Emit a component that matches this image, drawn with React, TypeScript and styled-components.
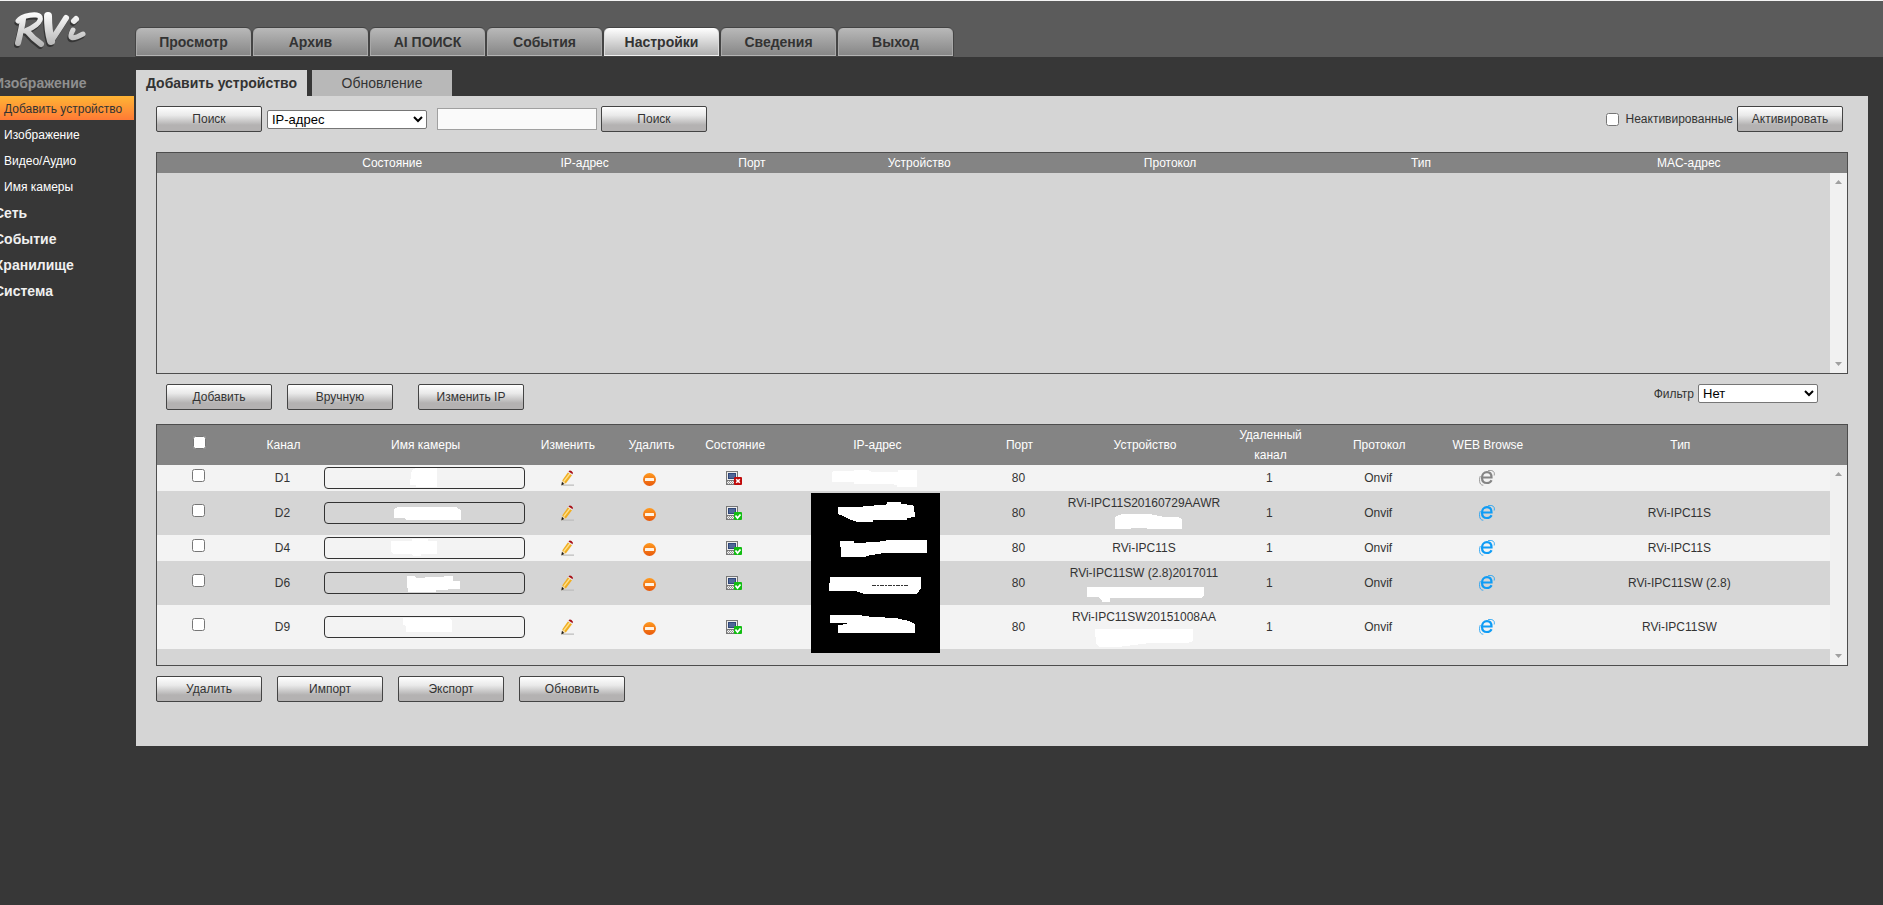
import React from "react";
import styled, { createGlobalStyle, css } from "styled-components";

const GlobalStyle = createGlobalStyle`
  * { box-sizing: border-box; }
  body {
    margin: 0;
    background: #373737;
    color: #333;
    font-family: "Liberation Sans", Arial, sans-serif;
    font-size: 12px;
    line-height: 20px;
  }
  button, input, select { font-family: inherit; }
`;

const Page = styled.div`
  min-height: 100vh;
  overflow-x: hidden;
`;

const Header = styled.header`
  display: flex;
  align-items: flex-end;
  height: 57px;
  border-top: 1px solid #f4f4f4;
  background: #5b5b5b;
`;

const LogoBox = styled.div`
  width: 135px;
  height: 56px;
  padding: 5px 8px;
`;

const MainNav = styled.nav`
  display: flex;
`;

const MainTab = styled.button<{ $active?: boolean }>`
  width: 117px;
  height: 30px;
  padding: 0;
  border: 1px solid #444;
  border-radius: 6px 6px 0 0;
  background: linear-gradient(#b9b9b9, #858585);
  box-shadow: inset 0 -1px 0 #b4b4b4, inset 1px 0 0 #a8a8a8, inset -1px 0 0 #a8a8a8;
  color: #333;
  font-size: 14px;
  font-weight: bold;
  ${(p) =>
    p.$active &&
    css`
      background: linear-gradient(#ffffff, #acacac);
      box-shadow: inset 0 -1px 0 #f0f0f0, inset 1px 0 0 #dcdcdc, inset -1px 0 0 #dcdcdc;
    `}
`;

const Columns = styled.div`
  display: flex;
  padding: 13px 15px 0 0;
`;

const Sidebar = styled.nav`
  display: flex;
  flex-direction: column;
  flex: none;
  gap: 2px;
  width: 136px;
  padding-right: 2px;
  overflow: hidden;
`;

const sideItem = css`
  display: block;
  height: 24px;
  line-height: 26px;
  text-decoration: none;
  white-space: nowrap;
`;

const SideGroup = styled.a<{ $open?: boolean }>`
  ${sideItem}
  margin-left: -6px;
  color: ${(p) => (p.$open ? "#8f8f8f" : "#f0f0f0")};
  font-size: 14px;
  font-weight: bold;
`;

const SideLink = styled.a<{ $active?: boolean }>`
  ${sideItem}
  padding-left: 4px;
  color: ${(p) => (p.$active ? "#333" : "#fff")};
  background: ${(p) => (p.$active ? "linear-gradient(#ffb535, #ff7a35)" : "none")};
`;

const Content = styled.main`
  flex: 1;
  min-width: 0;
`;

const SubTabs = styled.div`
  display: flex;
  gap: 5px;
`;

const SubTab = styled.button<{ $active?: boolean }>`
  width: ${(p) => (p.$active ? 171 : 140)}px;
  height: 26px;
  padding: 0;
  border: 0;
  background: ${(p) => (p.$active ? "#d5d5d5" : "#b8b8b8")};
  color: #333;
  font-size: 14px;
  font-weight: ${(p) => (p.$active ? "bold" : "normal")};
  white-space: nowrap;
`;

const Panel = styled.section`
  padding: 10px 20px 44px;
  background: #d5d5d5;
`;

const SearchBar = styled.div`
  display: flex;
  align-items: center;
  height: 26px;
  margin-bottom: 20px;
  padding-right: 5px;
`;

const ActionBar = styled.div`
  display: flex;
  align-items: flex-start;
  justify-content: space-between;
  margin: 10px 0 14px;
  padding: 0 30px 0 10px;
`;

const ButtonGroup = styled.div<{ $gap: number }>`
  display: flex;
  gap: ${(p) => p.$gap}px;
`;

const FooterBar = styled.div`
  display: flex;
  gap: 15px;
  margin-top: 10px;
`;

const Spacer = styled.div`
  flex: 1;
`;

const Gap = styled.div<{ $w: number }>`
  width: ${(p) => p.$w}px;
`;

const PushButton = styled.button`
  flex: none;
  width: 106px;
  height: 26px;
  padding: 0;
  border: 1px solid #444;
  border-radius: 2px;
  background: linear-gradient(#fff 0%, #e9e9e9 35%, #b4b2b2 75%, #b4b2b2 100%);
  color: #333;
  font-size: 12px;
`;

const Select = styled.select<{ $w: number }>`
  width: ${(p) => p.$w}px;
  height: 19px;
  padding: 0;
  border: 1px solid #767676;
  border-radius: 2px;
  background-color: #fff;
  color: #000;
  font-size: 13px;
`;

const SearchInput = styled.input`
  width: 160px;
  height: 22px;
  border: 1px solid #a0a0a0;
  background: #fafafa;
`;

const CheckLabel = styled.label`
  display: flex;
  align-items: center;
  gap: 7px;
  margin-right: 4px;
  white-space: nowrap;
`;

const FilterLabel = styled.label`
  display: flex;
  align-items: flex-start;
  gap: 4px;
`;

const Check = styled.input`
  display: block;
  width: 13px;
  height: 13px;
  margin: 0;
`;

const CellCheck = styled(Check)`
  margin: 0 auto 5px;
`;

const Grid = styled.div`
  display: flex;
  border: 1px solid #4d4d4d;
`;

const GridMain = styled.div<{ $head: number }>`
  flex: 1;
  min-width: 0;
  min-height: ${(p) => p.$head + 200}px;
`;

const Side = styled.div`
  display: flex;
  flex-direction: column;
  width: 17px;
`;

const SideCap = styled.div<{ $head: number }>`
  height: ${(p) => p.$head}px;
  background: #848484;
`;

const Scrollbar = styled.div`
  display: flex;
  flex: 1;
  flex-direction: column;
  align-items: center;
  justify-content: space-between;
  padding: 7px 0;
  background: #f1f1f1;
`;

const Table = styled.table`
  width: 100%;
  border-collapse: collapse;
  table-layout: fixed;
  text-align: center;
`;

const Th = styled.th`
  padding: 0 0 0 2px;
  background: #848484;
  color: #fff;
  font-weight: normal;
`;

const Tr = styled.tr`
  &:nth-child(odd) {
    background: #f3f3f3;
  }
`;

const Td = styled.td`
  position: relative;
  height: 26px;
  padding: 2px 0;
  vertical-align: middle;
  svg {
    display: block;
    margin: 0 auto;
  }
`;

const NameBox = styled.div`
  position: relative;
  height: 22px;
  svg {
    position: absolute;
    inset: 0;
  }
`;

const NameInput = styled.input`
  display: block;
  width: 100%;
  height: 22px;
  border: 1px solid #333;
  border-radius: 4px;
  background: transparent;
`;

const Cover = styled.div`
  position: absolute;
  z-index: 1;
  top: 2px;
  left: 50%;
  margin-left: -65px;
`;

const Arrow = ({ down }: { down?: boolean }) => (
  <svg width="7" height="4" aria-hidden="true">
    <path d={down ? "M0 0H7L3.5 4Z" : "M0 4H7L3.5 0Z"} fill="#a0a0a0" />
  </svg>
);

const Blot = ({ w, h, points }: { w: number; h: number; points: string }) => (
  <svg width={w} height={h} shapeRendering="crispEdges" aria-hidden="true">
    <polygon points={points} fill="#fff" />
  </svg>
);

const Logo = () => (
  <svg width="84" height="48" viewBox="0 0 84 48" role="img" aria-label="RVi">
    <defs>
      <linearGradient id="silver" gradientUnits="userSpaceOnUse" x1="0" y1="6" x2="0" y2="42">
        <stop offset="0" stopColor="#fff" />
        <stop offset="1" stopColor="#b0b0b0" />
      </linearGradient>
      <g id="mark" fill="none" strokeLinecap="round" strokeLinejoin="round">
        <path d="M15 13C14 21 12 29 10 37" strokeWidth="6" />
        <path d="M10 15C14 9 30 7 32 11C34 16 25 22 17 25" strokeWidth="5" />
        <path d="M19 25C23 30 27 34 33 38" strokeWidth="6" />
        <path d="M40 10C40 19 41 28 43 35" strokeWidth="8" />
        <path d="M43 35C48 28 53 20 58 12" strokeWidth="6" />
        <path d="M66 15L68 13" strokeWidth="6" />
        <path d="M65 24C60 33 64 34 75 28" strokeWidth="5" />
      </g>
    </defs>
    <use href="#mark" x="-1" y="2" stroke="#2c2c2c" opacity="0.800" />
    <use href="#mark" stroke="url(#silver)" />
  </svg>
);

const PencilIcon = () => (
  <svg width="15" height="16" viewBox="-2 0 15 16" aria-hidden="true">
    <path d="M2 14.500H13V15.700H1Z" fill="#bdbdbd" />
    <path d="M1 11L4.500 13.500L0.500 15.500Z" fill="#f3d9a5" />
    <path d="M1 11.800L3.200 14L0.300 15.500Z" fill="#1d1d1d" />
    <path d="M1.200 10.500L7 2.200L11 5.200L4.800 13.500Z" fill="#f0ae22" />
    <path d="M2.800 11.500L9 3.500" stroke="#ffe08a" strokeWidth="1.300" />
    <path d="M7 2.500L7.800 1.500L11.700 4.300L11 5.300Z" fill="#e8e8e8" />
    <path d="M7.500 1.500Q8.500 0 10.500 1Q12.600 2.200 11.700 4.300Z" fill="#a80f16" />
  </svg>
);

const MinusIcon = () => (
  <svg width="15" height="16" viewBox="0 0 15 16" aria-hidden="true">
    <defs>
      <linearGradient id="orange" x1="0" y1="0" x2="0" y2="1">
        <stop offset="0" stopColor="#ff9a1f" />
        <stop offset="1" stopColor="#e8590c" />
      </linearGradient>
    </defs>
    <circle cx="6.500" cy="9.500" r="6.500" fill="url(#orange)" />
    <rect x="2" y="8" width="9" height="3" rx="0.500" fill="#fff3e4" />
  </svg>
);

const StatusIcon = ({ online }: { online: boolean }) => (
  <svg width="16" height="14" viewBox="0 0 16 14" aria-hidden="true">
    <rect x="0.500" y="0.500" width="11" height="9" fill="#ececec" stroke="#777" />
    <rect x="2" y="2" width="8" height="6" fill="#2f4677" />
    <rect x="3" y="3" width="6" height="4" fill="#4f6799" />
    <rect x="0.500" y="9.500" width="11" height="4" fill="#f2f2f2" stroke="#777" />
    <path d="M1 10.500H8M2 11.500H8M1 12.500H8" stroke="#999" strokeDasharray="1 1" />
    <rect x="8" y="6" width="8" height="8" rx="1" fill={online ? "#12bd12" : "#c00a0a"} />
    {online ? (
      <path d="M9.500 9.500L11.500 12L14.500 8.500" fill="none" stroke="#fff" strokeWidth="1.800" />
    ) : (
      <path d="M10.200 8.200L13.800 11.800M13.800 8.200L10.200 11.800" stroke="#fff" strokeWidth="1.600" />
    )}
  </svg>
);

const BrowserIcon = ({ color }: { color: string }) => (
  <svg width="16" height="16" viewBox="0 0 16 16" fill="none" stroke={color} aria-hidden="true">
    <path d="M3.500 7.500H12.500C12.500 4.300 10.800 2.200 8 2.200C5 2.200 3 4.500 3 7.700C3 11 5 13 8 13C10.200 13 11.600 12 12.600 10.200" strokeWidth="2.200" />
    <path d="M9 0.700C12 0 14 0.600 15 2.200C15.500 3.200 15.500 4.500 15.200 5.500" strokeWidth="0.800" />
    <path d="M1.300 6C0.300 8.500 0.300 11 1 13C1.600 14.500 2.800 15.200 4.300 15.200" strokeWidth="0.800" />
  </svg>
);

const SideScroll = ({ head }: { head: number }) => (
  <Side>
    <SideCap $head={head} />
    <Scrollbar>
      <Arrow />
      <Arrow down />
    </Scrollbar>
  </Side>
);

const Cols = ({ widths }: { widths: number[] }) => (
  <colgroup>
    {widths.map((w, i) => (
      <col key={i} style={{ width: `${w}%` }} />
    ))}
  </colgroup>
);

const mainTabs = ["Просмотр", "Архив", "AI ПОИСК", "События", "Настройки", "Сведения", "Выход"];
const searchHeads = ["Состояние", "IP-адрес", "Порт", "Устройство", "Протокол", "Тип", "MAC-адрес"];
const deviceHeads = [
  "Канал", "Имя камеры", "Изменить", "Удалить", "Состояние", "IP-адрес", "Порт",
  "Устройство", "Удаленный канал", "Протокол", "WEB Browse", "Тип",
];

interface Device {
  id: string;
  name: string;
  device?: string;
  deviceBlot?: string;
  type?: string;
  online: boolean;
}

const devices: Device[] = [
  { id: "D1", name: "89,2 93,1 113,1 113,20 92,20 92,18 86,18 87,6", online: false },
  {
    id: "D2", name: "70,7 74,5 132,5 137,8 137,18 83,18 80,16 70,16",
    device: "RVi-IPC11S20160729AAWR", deviceBlot: "31,4 38,1 66,1 80,4 94,4 98,6 98,16 63,16 63,15 31,16",
    type: "RVi-IPC11S", online: true,
  },
  {
    id: "D4", name: "67,4 88,4 88,2 104,2 104,4 113,4 113,17 97,17 97,19 89,19 88,17 69,17 67,15",
    device: "RVi-IPC11S", type: "RVi-IPC11S", online: true,
  },
  {
    id: "D6", name: "83,4 91,4 92,6 110,5 129,4 129,9 136,9 136,17 112,18 112,20 84,20 83,12",
    device: "RVi-IPC11SW (2.8)2017011", deviceBlot: "3,4 120,4 120,13 117,15 26,15 26,19 18,19 18,17 14,14 3,14",
    type: "RVi-IPC11SW (2.8)", online: true,
  },
  {
    id: "D9", name: "79,2 125,2 128,5 128,16 82,16 82,10 79,9",
    device: "RVi-IPC11SW20151008AA", deviceBlot: "11,2 109,2 109,14 103,16 66,16 50,18 34,20 15,20 12,17",
    type: "RVi-IPC11SW", online: true,
  },
];

const AddressCover = () => (
  <Cover>
    <svg width="129" height="160" shapeRendering="crispEdges" aria-hidden="true">
      <rect width="129" height="160" fill="#000" />
      <g fill="#fff">
        <polygon points="27,14 52,14 52,13 73,12 76,11 76,9 90,9 90,11 101,12 103,14 104,24 96,25 96,27 62,27 62,29 47,29 40,27 36,25 32,23 27,21" />
        <polygon points="29,48 43,48 43,50 66,49 78,47 116,47 116,60 73,60 55,63 55,64 30,64 30,54 29,54" />
        <polygon points="19,84 110,84 110,95 106,101 53,101 44,98 18,98 18,90 19,90" />
        <polygon points="19,122 47,122 62,124 85,125 98,128 104,131 104,140 27,140 27,132 36,131 36,130 19,130" />
      </g>
      <path d="M61 92.500H98" stroke="#333" strokeDasharray="4 1 2 1" />
    </svg>
  </Cover>
);

export default function App() {
  return (
    <Page>
      <GlobalStyle />
      <Header>
        <LogoBox>
          <Logo />
        </LogoBox>
        <MainNav>
          {mainTabs.map((t) => (
            <MainTab key={t} $active={t === "Настройки"}>{t}</MainTab>
          ))}
        </MainNav>
      </Header>
      <Columns>
        <Sidebar>
          <SideGroup href="#image" $open>Изображение</SideGroup>
          <SideLink href="#add" $active>Добавить устройство</SideLink>
          <SideLink href="#picture">Изображение</SideLink>
          <SideLink href="#av">Видео/Аудио</SideLink>
          <SideLink href="#name">Имя камеры</SideLink>
          <SideGroup href="#net">Сеть</SideGroup>
          <SideGroup href="#event">Событие</SideGroup>
          <SideGroup href="#storage">Хранилище</SideGroup>
          <SideGroup href="#system">Система</SideGroup>
        </Sidebar>
        <Content>
          <SubTabs>
            <SubTab $active>Добавить устройство</SubTab>
            <SubTab>Обновление</SubTab>
          </SubTabs>
          <Panel>
            <SearchBar>
              <PushButton>Поиск</PushButton>
              <Gap $w={5} />
              <Select $w={160} aria-label="Критерий поиска">
                <option>IP-адрес</option>
              </Select>
              <Gap $w={10} />
              <SearchInput type="text" aria-label="Поиск" />
              <Gap $w={4} />
              <PushButton>Поиск</PushButton>
              <Spacer />
              <CheckLabel>
                <Check type="checkbox" />
                Неактивированные
              </CheckLabel>
              <PushButton>Активировать</PushButton>
            </SearchBar>

            <Grid>
              <GridMain $head={20}>
                <Table>
                  <Cols widths={[10, 8, 15, 5, 15, 15, 15, 17]} />
                  <thead>
                    <tr>
                      <Th />
                      {searchHeads.map((h) => (
                        <Th key={h} scope="col">{h}</Th>
                      ))}
                    </tr>
                  </thead>
                </Table>
              </GridMain>
              <SideScroll head={20} />
            </Grid>

            <ActionBar>
              <ButtonGroup $gap={25}>
                <ButtonGroup $gap={15}>
                  <PushButton>Добавить</PushButton>
                  <PushButton>Вручную</PushButton>
                </ButtonGroup>
                <PushButton>Изменить IP</PushButton>
              </ButtonGroup>
              <FilterLabel>
                Фильтр
                <Select $w={120}>
                  <option>Нет</option>
                </Select>
              </FilterLabel>
            </ActionBar>

            <Grid>
              <GridMain $head={40}>
                <Table>
                  <Cols widths={[5, 5, 12, 5, 5, 5, 12, 5, 10, 5, 8, 5, 18]} />
                  <thead>
                    <tr>
                      <Th scope="col">
                        <CellCheck type="checkbox" aria-label="Выбрать все" />
                      </Th>
                      {deviceHeads.map((h) => (
                        <Th key={h} scope="col">{h}</Th>
                      ))}
                    </tr>
                  </thead>
                  <tbody>
                    {devices.map((d) => (
                      <Tr key={d.id}>
                        <Td>
                          <CellCheck type="checkbox" aria-label={d.id} />
                        </Td>
                        <Td>{d.id}</Td>
                        <Td>
                          <NameBox>
                            <NameInput type="text" aria-label={`Имя камеры ${d.id}`} />
                            <Blot w={201} h={22} points={d.name} />
                          </NameBox>
                        </Td>
                        <Td><PencilIcon /></Td>
                        <Td><MinusIcon /></Td>
                        <Td><StatusIcon online={d.online} /></Td>
                        <Td>
                          {d.id === "D1" && (
                            <Blot w={88} h={17} points="1,1 22,1 22,0 36,0 40,2 66,2 66,0 85,0 85,17 65,17 65,15 59,14 22,14 22,12 0,12 0,4" />
                          )}
                          {d.id === "D2" && <AddressCover />}
                        </Td>
                        <Td>80</Td>
                        <Td>
                          {d.device}
                          {d.deviceBlot && <Blot w={120} h={20} points={d.deviceBlot} />}
                        </Td>
                        <Td>1</Td>
                        <Td>Onvif</Td>
                        <Td><BrowserIcon color={d.online ? "#0f9cf5" : "#858585"} /></Td>
                        <Td>{d.type}</Td>
                      </Tr>
                    ))}
                  </tbody>
                </Table>
              </GridMain>
              <SideScroll head={40} />
            </Grid>

            <FooterBar>
              <PushButton>Удалить</PushButton>
              <PushButton>Импорт</PushButton>
              <PushButton>Экспорт</PushButton>
              <PushButton>Обновить</PushButton>
            </FooterBar>
          </Panel>
        </Content>
      </Columns>
    </Page>
  );
}
